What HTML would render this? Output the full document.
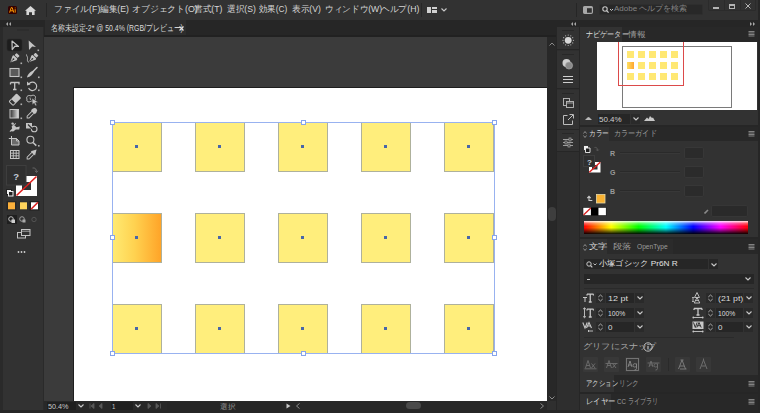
<!DOCTYPE html>
<html><head><meta charset="utf-8"><style>*{margin:0;padding:0;box-sizing:border-box}
html,body{width:760px;height:413px;overflow:hidden;background:#323232;font-family:"Liberation Sans",sans-serif;color:#d2d2d2}
.a{position:absolute}
.t{position:absolute;white-space:nowrap;line-height:1;transform-origin:0 0}
.sq{width:50px;height:50px;background:#ffee7c;border:1px solid #aeb19c}
.grad{background:linear-gradient(90deg,#ffea72,#ffd250 45%,#ffa428)}
.dot{width:3px;height:3px;background:#4866a8}
.hd{width:5px;height:5px;background:#fff;border:1px solid #86a4ec}
.trk{width:60px;height:2px;background:#2a2a2a;border-bottom:1px solid #383838}
.vbox{width:20px;height:12px;background:#2b2b2b;border:1px solid #373737;border-radius:2px}
</style></head><body>
<div class="a" style="left:0px;top:0px;width:760px;height:20px;background:#323232;"></div>
<div class="a" style="left:8px;top:6px;width:9px;height:8px;background:#330000;border-radius:1.5px"></div>
<svg class="a" style="left:9px;top:7px" width="7" height="6" viewBox="0 0 7 6"><path d="M0.6 5.6 L2.2 0.6 L3.2 0.6 L4.8 5.6 M1.3 3.8 L4.1 3.8 M6.2 2.2 L6.2 5.6 M6.2 0.6 L6.2 1.3" stroke="#ff9a00" stroke-width="1" fill="none"/></svg>
<svg class="a" style="left:25px;top:6px" width="11" height="9" viewBox="0 0 11 9"><path d="M5.5 0 L11 4.8 L9.6 4.8 L9.6 9 L7 9 L7 6.3 L4 6.3 L4 9 L1.4 9 L1.4 4.8 L0 4.8 Z" fill="#d8d8d8"/></svg>
<div class="a" style="left:46px;top:3px;width:1px;height:14px;background:#262626;"></div>
<div class="t" style="left:54px;top:5px;font-size:9px;color:#d6d6d6;font-weight:normal;transform:scaleX(0.975)">ファイル(F)</div>
<div class="t" style="left:100px;top:5px;font-size:9px;color:#d6d6d6;font-weight:normal;transform:scaleX(0.962)">編集(E)</div>
<div class="t" style="left:132px;top:5px;font-size:9px;color:#d6d6d6;font-weight:normal;transform:scaleX(0.982)">オブジェクト(O)</div>
<div class="t" style="left:194px;top:5px;font-size:9px;color:#d6d6d6;font-weight:normal;transform:scaleX(0.962)">書式(T)</div>
<div class="t" style="left:227px;top:5px;font-size:9px;color:#d6d6d6;font-weight:normal;transform:scaleX(0.962)">選択(S)</div>
<div class="t" style="left:259px;top:5px;font-size:9px;color:#d6d6d6;font-weight:normal;transform:scaleX(0.926)">効果(C)</div>
<div class="t" style="left:292px;top:5px;font-size:9px;color:#d6d6d6;font-weight:normal;transform:scaleX(0.962)">表示(V)</div>
<div class="t" style="left:325px;top:5px;font-size:9px;color:#d6d6d6;font-weight:normal;transform:scaleX(0.960)">ウィンドウ(W)</div>
<div class="t" style="left:381px;top:5px;font-size:9px;color:#d6d6d6;font-weight:normal;transform:scaleX(0.971)">ヘルプ(H)</div>
<div class="a" style="left:421px;top:3px;width:1px;height:14px;background:#262626;"></div>
<div class="a" style="left:427px;top:7px;width:4px;height:6px;background:#d0d0d0;"></div>
<div class="a" style="left:432px;top:7px;width:5px;height:2px;background:#d0d0d0;"></div>
<div class="a" style="left:432px;top:10px;width:5px;height:3px;background:#d0d0d0;"></div>
<svg class="a" style="left:441px;top:8px" width="6" height="4" viewBox="0 0 6 4"><path d="M0.5 0.5 L3 3 L5.5 0.5" stroke="#c8c8c8" fill="none" stroke-width="1.1"/></svg>
<div class="a" style="left:576px;top:3px;width:1px;height:14px;background:#262626;"></div>
<svg class="a" style="left:583px;top:6px" width="10" height="8" viewBox="0 0 10 8"><rect x="0.6" y="0.6" width="8.8" height="6.8" rx="1.2" fill="none" stroke="#a8a8a8" stroke-width="1.2"/><rect x="0.6" y="0.6" width="3.4" height="6.8" fill="#a8a8a8"/><path d="M0.6 1.5 H9.4" stroke="#a8a8a8" stroke-width="1.4"/></svg>
<div class="a" style="left:599px;top:4px;width:104px;height:11px;background:#282828;border-radius:2px;border:1px solid #2e2e2e"></div>
<svg class="a" style="left:602px;top:6px" width="12" height="8" viewBox="0 0 12 8"><circle cx="3" cy="3" r="2.2" stroke="#c8c8c8" fill="none" stroke-width="1.1"/><path d="M4.6 4.6 L6.6 6.6" stroke="#c8c8c8" stroke-width="1.3"/><path d="M8 3 L9.5 4.5 L11 3" stroke="#c8c8c8" fill="none"/></svg>
<div class="t" style="left:614px;top:5px;font-size:8px;color:#858585;font-weight:normal;transform:scaleX(1.000)">Adobe ヘルプを検索</div>
<div class="a" style="left:708px;top:0px;width:48px;height:11px;background:transparent;border:1px solid #2b2b2b;border-top:none;border-radius:0 0 2px 2px"></div>
<div class="a" style="left:724px;top:0px;width:1px;height:11px;background:#2b2b2b;"></div>
<div class="a" style="left:740px;top:0px;width:1px;height:11px;background:#2b2b2b;"></div>
<div class="a" style="left:713px;top:7px;width:6px;height:2px;background:#b4b4b4;"></div>
<div class="a" style="left:729px;top:4px;width:6px;height:5px;background:transparent;border:1px solid #b4b4b4;border-top-width:2px"></div>
<svg class="a" style="left:745px;top:3px" width="6" height="6" viewBox="0 0 6 6"><path d="M0.5 0.5 L5.5 5.5 M5.5 0.5 L0.5 5.5" stroke="#b4b4b4" stroke-width="1"/></svg>
<div class="a" style="left:0px;top:20px;width:44px;height:7px;background:#262626;"></div>
<svg class="a" style="left:6px;top:22px" width="5" height="4" viewBox="0 0 5 4"><path d="M2 0 L0 2 L2 4 Z M5 0 L3 2 L5 4 Z" fill="#a8a8a8"/></svg>
<div class="a" style="left:44px;top:20px;width:513px;height:17px;background:#262626;"></div>
<div class="a" style="left:45px;top:20px;width:141px;height:15px;background:#2d2d2d;"></div>
<div class="a" style="left:44px;top:35px;width:513px;height:2px;background:#212121;"></div>
<div class="t" style="left:51px;top:24px;font-size:9px;color:#dadada;font-weight:normal;transform:scaleX(0.768)">名称未設定-2* @ 50.4% (RGB/プレビュー)</div>
<svg class="a" style="left:179px;top:26px" width="5" height="5" viewBox="0 0 5 5"><path d="M0.5 0.5 L4.5 4.5 M4.5 0.5 L0.5 4.5" stroke="#e0e0e0" stroke-width="1.2"/></svg>
<div class="a" style="left:0px;top:27px;width:44px;height:386px;background:#2a2a2a;"></div>
<div class="a" style="left:3px;top:27px;width:40px;height:383px;background:#323232;"></div>
<svg class="a" style="left:0;top:0" width="44" height="260" viewBox="0 0 44 260">
<rect x="17" y="29.5" width="12" height="1" fill="#282828"/>
<rect x="7" y="39" width="15" height="12" rx="2" fill="#1d1d1d" stroke="#2a2a2a" stroke-width="0.6"/>
<path d="M12 41 L18.5 46.5 L15 46.2 L12.2 49.5 Z" fill="none" stroke="#c4c4c4" stroke-width="1.2" stroke-linejoin="round"/>
<path d="M28.7 40.5 L36 47 L32.2 46.6 L29 50 Z" fill="#c4c4c4"/>
<rect x="37.5" y="49.5" width="1.6" height="1.6" fill="#b0b0b0"/>
<!-- pen -->
<g transform="translate(14.3,58.3) rotate(45)">
<path d="M0 5.8 L-3 -0.4 Q-3.1 -1.6 -2.2 -1.8 H2.2 Q3.1 -1.6 3 -0.4 Z" fill="#c4c4c4"/>
<rect x="-2.1" y="-5.4" width="4.2" height="2.9" rx="0.6" fill="#c4c4c4"/>
<path d="M0 5.8 V1.3" stroke="#323232" stroke-width="0.8"/><circle cx="0" cy="1.1" r="0.8" fill="#323232"/>
</g>
<rect x="20.5" y="62.5" width="1.6" height="1.6" fill="#b0b0b0"/>
<g transform="translate(33.2,58) rotate(45)">
<path d="M0 5.8 L-3 -0.4 Q-3.1 -1.6 -2.2 -1.8 H2.2 Q3.1 -1.6 3 -0.4 Z" fill="#c4c4c4"/>
<rect x="-2.1" y="-5.4" width="4.2" height="2.9" rx="0.6" fill="#c4c4c4"/>
<path d="M0 5.8 V1.3" stroke="#323232" stroke-width="0.8"/><circle cx="0" cy="1.1" r="0.8" fill="#323232"/>
</g>
<path d="M29 62.3 C26.5 61.5 27.8 59 27.5 57.5 C27.3 56.3 26.3 55.5 26.5 54.5" fill="none" stroke="#c4c4c4" stroke-width="0.9"/>
<!-- rectangle -->
<rect x="10" y="68.5" width="9" height="8" fill="#5a5a5a" stroke="#c4c4c4" stroke-width="1.1"/>
<rect x="20.5" y="76.5" width="1.6" height="1.6" fill="#b0b0b0"/>
<!-- brush -->
<path d="M37 67.5 L32.8 71.7" stroke="#c4c4c4" stroke-width="1.5" stroke-linecap="round"/>
<path d="M33.6 70.6 L34.2 71.2 C33 74 30.5 77 27 77.6 C27.4 74.5 30.5 71.6 33.6 70.6 Z" fill="#c4c4c4"/>
<rect x="38" y="76.5" width="1.6" height="1.6" fill="#b0b0b0"/>
<!-- type -->
<path d="M10.5 82.5 L19 82.5 L19 84.5 M10.5 82.5 L10.5 84.5 M14.7 82.5 L14.7 89.5 M13 89.5 L16.5 89.5" fill="none" stroke="#c4c4c4" stroke-width="1.3"/>
<rect x="20.5" y="89.5" width="1.6" height="1.6" fill="#b0b0b0"/>
<!-- rotate -->
<path d="M29 84 A4.2 4.2 0 1 1 28.6 88" fill="none" stroke="#c4c4c4" stroke-width="1.2"/>
<path d="M27 81.5 L30.5 84.5 L27 85.5 Z" fill="#c4c4c4"/>
<rect x="38" y="89.5" width="1.6" height="1.6" fill="#b0b0b0"/>
<!-- eraser -->
<g transform="translate(15,99.6) rotate(-45)">
<rect x="-2.3" y="-3.3" width="7.8" height="6.6" rx="1" fill="#c4c4c4"/>
<path d="M-2 -2.8 H-4.7 Q-5.5 -2.8 -5.5 -2 V2 Q-5.5 2.8 -4.7 2.8 H-2" fill="none" stroke="#c4c4c4" stroke-width="1"/>
</g>
<rect x="20.5" y="103.5" width="1.6" height="1.6" fill="#b0b0b0"/>
<!-- shaper -->
<path d="M27 99.2 C25.6 96.4 28.8 94.6 31 96 C33.2 94.2 36.6 95.8 35.2 98.6 C36 100.8 33.4 102.4 31.2 101 C29.2 102.8 26 101.6 27 99.2 Z" fill="none" stroke="#c4c4c4" stroke-width="1"/>
<path d="M30 97.5 L30.5 100" stroke="#c4c4c4" stroke-width="0.8"/>
<path d="M32 98.3 L38.3 102.2 L35.5 102.6 L36.8 105.2 L35.4 105.8 L34.2 103.2 L32.3 104.8 Z" fill="#c4c4c4" stroke="#323232" stroke-width="0.5"/>
<!-- gradient -->
<defs><linearGradient id="g1" x1="0" y1="0" x2="1" y2="0"><stop offset="0" stop-color="#303030"/><stop offset="1" stop-color="#e0e0e0"/></linearGradient></defs>
<rect x="10" y="109.5" width="8.5" height="8.5" fill="url(#g1)" stroke="#c4c4c4" stroke-width="1"/>
<rect x="20.5" y="117.5" width="1.6" height="1.6" fill="#b0b0b0"/>
<!-- eyedropper -->
<g transform="translate(31.8,113.4) rotate(-45)">
<path d="M-6.6 0 L-5.2 -1.4 H1.8 V1.4 H-5.2 Z" fill="none" stroke="#c4c4c4" stroke-width="0.95"/>
<path d="M1.6 -2.7 H3.8 Q6.6 -2.2 6.6 0 Q6.6 2.2 3.8 2.7 H1.6 Z" fill="#c4c4c4"/>
</g>
<!-- puppet warp -->
<path d="M9.6 131.2 L12.2 128.6 L11.6 126.4 L13.8 124.8 L16.4 127.2 L19.8 126.4 L19.2 129.6 L15.8 129.4 L13.2 131.6 L11 131.2 L10.2 132 Z" fill="#c4c4c4"/>
<circle cx="12.6" cy="123.6" r="1.2" fill="#c4c4c4"/>
<path d="M12.6 125.5 L16 123.5" stroke="#c4c4c4" stroke-width="0.9"/>
<!-- shape builder -->
<rect x="26" y="123" width="6" height="5.5" fill="#c4c4c4"/>
<circle cx="34.2" cy="129" r="2.8" fill="#323232" stroke="#c4c4c4" stroke-width="1.1"/>
<path d="M28 124.5 L33 129.5" stroke="#323232" stroke-width="1.2"/>
<!-- artboard -->
<path d="M11.5 138.5 H16.5 L19 141 V145 H11.5 Z" fill="#6a6a6a" stroke="#c4c4c4" stroke-width="1"/>
<path d="M16.5 138.5 V141 H19" fill="none" stroke="#c4c4c4" stroke-width="0.9"/>
<path d="M8.8 138.5 H13.5 M11.5 136 V140.5" stroke="#c4c4c4" stroke-width="1"/>
<!-- zoom -->
<circle cx="30.4" cy="139.8" r="3.5" fill="none" stroke="#c4c4c4" stroke-width="1.1"/>
<path d="M33 142.5 L36.3 145.6" stroke="#c4c4c4" stroke-width="1.5"/>
<rect x="38" y="145" width="1.6" height="1.6" fill="#b0b0b0"/>
<!-- mesh -->
<rect x="10.5" y="150.5" width="8.5" height="8" fill="none" stroke="#c4c4c4" stroke-width="1"/>
<path d="M13.3 150.5 V158.5 M16.2 150.5 V158.5 M10.5 153.2 H19 M10.5 155.8 H19" stroke="#c4c4c4" stroke-width="0.9"/>
<!-- eyedropper2 -->
<g transform="translate(31.8,154.4) rotate(-45)">
<path d="M-6.6 0 L-5.2 -1.4 H1.8 V1.4 H-5.2 Z" fill="none" stroke="#c4c4c4" stroke-width="0.95"/>
<path d="M1.6 -3 L6.8 0 L1.6 3 Z" fill="#c4c4c4"/>
</g>
<!-- fill/stroke -->
<path d="M16 176 H37 V196 H16 Z M22 182 V190 H31 V182 Z" fill="#ffffff" fill-rule="evenodd"/>
<path d="M16.5 195.5 L36.5 176.5" stroke="#e0201e" stroke-width="1.6"/>
<rect x="6.5" y="165.5" width="19.5" height="19.5" fill="#2f2f2f" stroke="#3e3e3e" stroke-width="1"/>
<text x="13.3" y="179.5" font-family="Liberation Sans" font-size="9.5" font-weight="bold" fill="#c4ccd8">?</text>
<path d="M32.5 168 C35 167.5 36.5 169 36.5 171.8 M35 170.8 L36.5 172.5 L38 170.8" stroke="#6a6a6a" fill="none" stroke-width="0.9"/>
<rect x="6.5" y="189.5" width="5" height="5" fill="#f0f0f0" stroke="#202020" stroke-width="1"/>
<rect x="8.5" y="191.5" width="4.5" height="4.5" fill="#202020" stroke="#f0f0f0" stroke-width="1"/>
<!-- swatches -->
<rect x="6.5" y="201" width="10" height="9.5" fill="#262626"/>
<rect x="8" y="202.3" width="7" height="7" fill="#fbb03b"/>
<rect x="18.5" y="201" width="10" height="9.5" fill="#2e2e2e"/>
<rect x="20" y="202.3" width="7" height="7" fill="#ffd45c"/>
<rect x="29.5" y="201" width="10" height="9.5" fill="#1e1e1e"/>
<rect x="31" y="202.3" width="7" height="7" fill="#ffffff"/>
<path d="M31 209.3 L38 202.3" stroke="#d81e1e" stroke-width="1.6"/>
<!-- draw modes -->
<rect x="7" y="215" width="10" height="9" fill="#1f1f1f"/>
<circle cx="11" cy="219" r="2.3" fill="none" stroke="#d0d0d0" stroke-width="0.9"/>
<rect x="11.5" y="219.5" width="3.5" height="3.5" fill="#d0d0d0"/>
<circle cx="22" cy="219" r="2.3" fill="none" stroke="#a8a8a8" stroke-width="0.9"/>
<rect x="22.5" y="219.5" width="3" height="3" fill="#a8a8a8"/>
<circle cx="34" cy="219.5" r="2.2" fill="none" stroke="#555" stroke-width="0.9"/>
<!-- screen mode -->
<rect x="17.5" y="232.5" width="8" height="5.5" fill="#323232" stroke="#c4c4c4" stroke-width="1"/>
<rect x="21.5" y="229.5" width="8.5" height="6" fill="#323232" stroke="#c4c4c4" stroke-width="1"/>
<path d="M21.5 231.2 H30" stroke="#c4c4c4" stroke-width="0.8"/>
<!-- more -->
<circle cx="18.5" cy="252" r="0.9" fill="#d0d0d0"/><circle cx="21.5" cy="252" r="0.9" fill="#d0d0d0"/><circle cx="24.5" cy="252" r="0.9" fill="#d0d0d0"/>
</svg>
<div class="a" style="left:44px;top:37px;width:503px;height:364px;background:#3b3b3b;"></div>
<div class="a" style="left:73px;top:87px;width:474px;height:314px;background:#1e1e1e;"></div>
<div class="a" style="left:74px;top:88px;width:473px;height:313px;background:#ffffff;"></div>
<div class="a sq" style="left:112px;top:122px"></div><div class="a dot" style="left:135px;top:145px"></div>
<div class="a sq" style="left:195px;top:122px"></div><div class="a dot" style="left:218px;top:145px"></div>
<div class="a sq" style="left:278px;top:122px"></div><div class="a dot" style="left:301px;top:145px"></div>
<div class="a sq" style="left:361px;top:122px"></div><div class="a dot" style="left:384px;top:145px"></div>
<div class="a sq" style="left:444px;top:122px"></div><div class="a dot" style="left:467px;top:145px"></div>
<div class="a sq grad" style="left:112px;top:213px"></div><div class="a dot" style="left:135px;top:236px"></div>
<div class="a sq" style="left:195px;top:213px"></div><div class="a dot" style="left:218px;top:236px"></div>
<div class="a sq" style="left:278px;top:213px"></div><div class="a dot" style="left:301px;top:236px"></div>
<div class="a sq" style="left:361px;top:213px"></div><div class="a dot" style="left:384px;top:236px"></div>
<div class="a sq" style="left:444px;top:213px"></div><div class="a dot" style="left:467px;top:236px"></div>
<div class="a sq" style="left:112px;top:304px"></div><div class="a dot" style="left:135px;top:327px"></div>
<div class="a sq" style="left:195px;top:304px"></div><div class="a dot" style="left:218px;top:327px"></div>
<div class="a sq" style="left:278px;top:304px"></div><div class="a dot" style="left:301px;top:327px"></div>
<div class="a sq" style="left:361px;top:304px"></div><div class="a dot" style="left:384px;top:327px"></div>
<div class="a sq" style="left:444px;top:304px"></div><div class="a dot" style="left:467px;top:327px"></div>
<div class="a" style="left:112px;top:122px;width:383px;height:232px;border:1px solid #98b2f0"></div>
<div class="a hd" style="left:110px;top:120px"></div>
<div class="a hd" style="left:301px;top:120px"></div>
<div class="a hd" style="left:492px;top:120px"></div>
<div class="a hd" style="left:110px;top:235px"></div>
<div class="a hd" style="left:492px;top:235px"></div>
<div class="a hd" style="left:110px;top:351px"></div>
<div class="a hd" style="left:301px;top:351px"></div>
<div class="a hd" style="left:492px;top:351px"></div>
<div class="a" style="left:547px;top:37px;width:9px;height:373px;background:#282828;"></div>
<div class="a" style="left:548px;top:207px;width:8px;height:14px;background:#3e3e3e;border-radius:4px"></div>
<svg class="a" style="left:549px;top:42px" width="6" height="4" viewBox="0 0 6 4"><path d="M0.5 3.5 L3 1 L5.5 3.5" stroke="#8a8a8a" fill="none" stroke-width="1"/></svg>
<svg class="a" style="left:549px;top:396px" width="6" height="4" viewBox="0 0 6 4"><path d="M0.5 0.5 L3 3 L5.5 0.5" stroke="#8a8a8a" fill="none" stroke-width="1"/></svg>
<div class="a" style="left:44px;top:401px;width:503px;height:9px;background:#282828;"></div>
<div class="a" style="left:47px;top:402px;width:29px;height:8px;background:#1f1f1f;"></div>
<div class="t" style="left:48px;top:403px;font-size:8px;color:#c8c8c8;font-weight:normal;transform:scaleX(0.905)">50.4%</div>
<svg class="a" style="left:78px;top:404px" width="6" height="4" viewBox="0 0 6 4"><path d="M0.5 0.5 L3 3 L5.5 0.5" stroke="#c8c8c8" fill="none" stroke-width="1.1"/></svg>
<svg class="a" style="left:89px;top:403px" width="22" height="6" viewBox="0 0 22 6"><path d="M1 0.5 V5.5 M5 0.5 L2 3 L5 5.5 Z M13 0.5 L10 3 L13 5.5 Z" stroke="#5a5a5a" fill="#5a5a5a" stroke-width="0.8"/></svg>
<div class="a" style="left:111px;top:402px;width:22px;height:8px;background:#1f1f1f;"></div>
<div class="t" style="left:112px;top:403px;font-size:8px;color:#c8c8c8;font-weight:normal;transform:scaleX(0.750)">1</div>
<svg class="a" style="left:135px;top:404px" width="6" height="4" viewBox="0 0 6 4"><path d="M0.5 0.5 L3 3 L5.5 0.5" stroke="#c8c8c8" fill="none" stroke-width="1.1"/></svg>
<svg class="a" style="left:146px;top:403px" width="22" height="6" viewBox="0 0 22 6"><path d="M2 0.5 L5 3 L2 5.5 Z M10 0.5 L13 3 L10 5.5 Z M14.5 0.5 V5.5" stroke="#5a5a5a" fill="#5a5a5a" stroke-width="0.8"/></svg>
<div class="a" style="left:167px;top:402px;width:115px;height:8px;background:#262626;"></div>
<div class="t" style="left:220px;top:403px;font-size:7px;color:#9a9a9a;font-weight:normal;transform:scaleX(1.100)">選択</div>
<svg class="a" style="left:286px;top:403px" width="5" height="6" viewBox="0 0 5 6"><path d="M0.5 0.5 L4.5 3 L0.5 5.5 Z" fill="#c8c8c8"/></svg>
<svg class="a" style="left:296px;top:403px" width="4" height="6" viewBox="0 0 4 6"><path d="M3.5 0.5 L0.5 3 L3.5 5.5" stroke="#8a8a8a" fill="none"/></svg>
<div class="a" style="left:406px;top:402px;width:15px;height:7px;background:#4a4a4a;border-radius:3.5px"></div>
<div class="a" style="left:547px;top:401px;width:9px;height:9px;background:#2f2f2f;"></div>
<svg class="a" style="left:540px;top:403px" width="4" height="6" viewBox="0 0 4 6"><path d="M0.5 0.5 L3.5 3 L0.5 5.5" stroke="#8a8a8a" fill="none"/></svg>
<div class="a" style="left:0px;top:410px;width:760px;height:3px;background:#262626;"></div>
<div class="a" style="left:556px;top:20px;width:24px;height:7px;background:#262626;"></div>
<div class="a" style="left:556px;top:27px;width:24px;height:383px;background:#2e2e2e;border-left:1px solid #262626;border-right:1px solid #262626"></div>
<div class="a" style="left:557px;top:27px;width:22px;height:23px;background:#323232;border-bottom:1px solid #262626"></div>
<div class="a" style="left:562px;top:30px;width:12px;height:1px;background:#282828;"></div>
<div class="a" style="left:557px;top:51px;width:22px;height:38px;background:#323232;border-bottom:1px solid #262626"></div>
<div class="a" style="left:562px;top:54px;width:12px;height:1px;background:#282828;"></div>
<div class="a" style="left:557px;top:90px;width:22px;height:40px;background:#323232;border-bottom:1px solid #262626"></div>
<div class="a" style="left:562px;top:93px;width:12px;height:1px;background:#282828;"></div>
<div class="a" style="left:557px;top:130px;width:22px;height:22px;background:#323232;border-bottom:1px solid #262626"></div>
<div class="a" style="left:562px;top:133px;width:12px;height:1px;background:#282828;"></div>
<svg class="a" style="left:557px;top:27px" width="22" height="130" viewBox="557 27 22 130">
<!-- sun -->
<circle cx="568.2" cy="40.3" r="3.4" fill="#d8d8d8"/><circle cx="573.40" cy="40.30" r="0.6" fill="#b8b8b8"/><circle cx="572.70" cy="42.90" r="0.6" fill="#b8b8b8"/><circle cx="570.80" cy="44.80" r="0.6" fill="#b8b8b8"/><circle cx="568.20" cy="45.50" r="0.6" fill="#b8b8b8"/><circle cx="565.60" cy="44.80" r="0.6" fill="#b8b8b8"/><circle cx="563.70" cy="42.90" r="0.6" fill="#b8b8b8"/><circle cx="563.00" cy="40.30" r="0.6" fill="#b8b8b8"/><circle cx="563.70" cy="37.70" r="0.6" fill="#b8b8b8"/><circle cx="565.60" cy="35.80" r="0.6" fill="#b8b8b8"/><circle cx="568.20" cy="35.10" r="0.6" fill="#b8b8b8"/><circle cx="570.80" cy="35.80" r="0.6" fill="#b8b8b8"/><circle cx="572.70" cy="37.70" r="0.6" fill="#b8b8b8"/>
<!-- circles -->
<circle cx="566.5" cy="63" r="4" fill="#cfcfcf"/>
<circle cx="569" cy="65.5" r="3.6" fill="#8a8a8a" stroke="#b0b0b0" stroke-width="0.6"/>
<!-- lines -->
<path d="M563 76.5 H573 M563 79.5 H573 M563 82.5 H573" stroke="#cfcfcf" stroke-width="1.1"/>
<!-- copy -->
<rect x="563.5" y="98.5" width="6" height="7" fill="none" stroke="#bdbdbd" stroke-width="0.9"/>
<rect x="566.5" y="101.5" width="7" height="6" fill="#323232" stroke="#bdbdbd" stroke-width="0.9"/>
<path d="M566.5 103 H573.5" stroke="#bdbdbd" stroke-width="0.8"/>
<!-- export -->
<path d="M567.5 115.5 H563.5 V124.5 H572.5 V120.5" fill="none" stroke="#bdbdbd" stroke-width="1"/>
<path d="M568 120 L573 115 M569.5 114.5 H573.5 V118.5" fill="none" stroke="#bdbdbd" stroke-width="1"/>
<!-- sliders -->
<path d="M563 139.5 H573 M563 142.5 H573 M563 145.5 H573" stroke="#a8a8a8" stroke-width="0.9"/>
<rect x="569" y="138" width="2" height="3" fill="#323232" stroke="#a8a8a8" stroke-width="0.7"/>
<rect x="565" y="141" width="2" height="3" fill="#323232" stroke="#a8a8a8" stroke-width="0.7"/>
<rect x="568" y="144" width="2" height="3" fill="#323232" stroke="#a8a8a8" stroke-width="0.7"/>
</svg>
<div class="a" style="left:580px;top:20px;width:180px;height:393px;background:#262626;"></div>
<div class="a" style="left:758px;top:0px;width:2px;height:413px;background:#262626;"></div>
<svg class="a" style="left:750px;top:22px" width="5" height="4" viewBox="0 0 5 4"><path d="M0 0 L2 2 L0 4 Z M3 0 L5 2 L3 4 Z" fill="#a8a8a8"/></svg>
<svg class="a" style="left:571px;top:22px" width="5" height="4" viewBox="0 0 5 4"><path d="M2 0 L0 2 L2 4 Z M5 0 L3 2 L5 4 Z" fill="#a8a8a8"/></svg>
<div class="a" style="left:580px;top:27px;width:178px;height:15px;background:#282828;"></div>
<div class="a" style="left:580px;top:27px;width:42px;height:15px;background:#323232;"></div>
<div class="t" style="left:586px;top:31px;font-size:8px;color:#dcdcdc;font-weight:normal;transform:scaleX(0.889)">ナビゲーター</div>
<div class="t" style="left:628px;top:31px;font-size:8px;color:#9c9c9c;font-weight:normal;transform:scaleX(1.083)">情報</div>
<svg class="a" style="left:748px;top:31px" width="7" height="6" viewBox="0 0 7 6"><path d="M0.5 0.5 H6.5 M0.5 2 H6.5 M0.5 3.5 H6.5 M0.5 5 H6.5" stroke="#8c8c8c" stroke-width="0.9"/></svg>
<div class="a" style="left:580px;top:42px;width:178px;height:83px;background:#323232;"></div>
<div class="a" style="left:597px;top:42px;width:160px;height:68px;background:#ffffff;"></div>
<div class="a" style="left:622px;top:46px;width:110px;height:62px;background:transparent;border:1px solid #7a7a7a"></div>
<div class="a" style="left:627px;top:51px;width:7px;height:7px;background:#ffe873;"></div>
<div class="a" style="left:638px;top:51px;width:7px;height:7px;background:#ffe873;"></div>
<div class="a" style="left:649px;top:51px;width:7px;height:7px;background:#ffe873;"></div>
<div class="a" style="left:660px;top:51px;width:7px;height:7px;background:#ffe873;"></div>
<div class="a" style="left:671px;top:51px;width:7px;height:7px;background:#ffe873;"></div>
<div class="a" style="left:627px;top:62px;width:7px;height:7px;background:linear-gradient(90deg,#ffe060,#ffa630);"></div>
<div class="a" style="left:638px;top:62px;width:7px;height:7px;background:#ffe873;"></div>
<div class="a" style="left:649px;top:62px;width:7px;height:7px;background:#ffe873;"></div>
<div class="a" style="left:660px;top:62px;width:7px;height:7px;background:#ffe873;"></div>
<div class="a" style="left:671px;top:62px;width:7px;height:7px;background:#ffe873;"></div>
<div class="a" style="left:627px;top:73px;width:7px;height:7px;background:#ffe873;"></div>
<div class="a" style="left:638px;top:73px;width:7px;height:7px;background:#ffe873;"></div>
<div class="a" style="left:649px;top:73px;width:7px;height:7px;background:#ffe873;"></div>
<div class="a" style="left:660px;top:73px;width:7px;height:7px;background:#ffe873;"></div>
<div class="a" style="left:671px;top:73px;width:7px;height:7px;background:#ffe873;"></div>
<div class="a" style="left:618px;top:42px;width:66px;height:44px;background:transparent;border:1px solid #dc4a4a;border-top:none"></div>
<svg class="a" style="left:585px;top:117px" width="7" height="3" viewBox="0 0 7 3"><path d="M0 3 L2.5 0.5 L3.5 0 L4.5 0.5 L7 3 Z" fill="#b8b8b8"/></svg>
<div class="a" style="left:598px;top:114px;width:32px;height:10px;background:#262626;"></div>
<div class="t" style="left:599px;top:116px;font-size:8px;color:#cfcfcf;font-weight:normal;transform:scaleX(1.000)">50.4%</div>
<div class="a" style="left:631px;top:114px;width:9px;height:10px;background:#2a2a2a;"></div>
<svg class="a" style="left:633px;top:117px" width="6" height="4" viewBox="0 0 6 4"><path d="M0.5 0.5 L3 3 L5.5 0.5" stroke="#c8c8c8" fill="none" stroke-width="1.1"/></svg>
<svg class="a" style="left:644px;top:116px" width="11" height="5" viewBox="0 0 11 5"><path d="M0 5 L3 1.5 L4.5 3 L6 0 L8 2 L9 1.5 L11 5 Z" fill="#c8c8c8"/></svg>
<div class="a" style="left:580px;top:127px;width:178px;height:14px;background:#282828;"></div>
<div class="a" style="left:580px;top:127px;width:29px;height:14px;background:#323232;"></div>
<div class="a" style="left:609px;top:127px;width:41px;height:14px;background:#2b2b2b;"></div>
<svg class="a" style="left:583px;top:131px" width="4" height="7" viewBox="0 0 4 7"><path d="M0.5 2.5 L2 0.5 L3.5 2.5 M0.5 4.5 L2 6.5 L3.5 4.5" stroke="#a0a0a0" fill="none" stroke-width="0.8"/></svg>
<div class="t" style="left:589px;top:130px;font-size:8px;color:#dcdcdc;font-weight:normal;transform:scaleX(0.833)">カラー</div>
<div class="t" style="left:614px;top:130px;font-size:8px;color:#9c9c9c;font-weight:normal;transform:scaleX(0.889)">カラーガイド</div>
<svg class="a" style="left:748px;top:131px" width="7" height="6" viewBox="0 0 7 6"><path d="M0.5 0.5 H6.5 M0.5 2 H6.5 M0.5 3.5 H6.5 M0.5 5 H6.5" stroke="#8c8c8c" stroke-width="0.9"/></svg>
<div class="a" style="left:580px;top:141px;width:178px;height:96px;background:#323232;"></div>
<div class="t" style="left:610px;top:150px;font-size:7px;color:#9a9a9a;font-weight:bold;transform:scaleX(1.000)">R</div>
<div class="a trk" style="left:620px;top:152px"></div>
<div class="a vbox" style="left:684px;top:147px"></div>
<div class="t" style="left:610px;top:169px;font-size:7px;color:#9a9a9a;font-weight:bold;transform:scaleX(1.000)">G</div>
<div class="a trk" style="left:620px;top:171px"></div>
<div class="a vbox" style="left:684px;top:166px"></div>
<div class="t" style="left:610px;top:188px;font-size:7px;color:#9a9a9a;font-weight:bold;transform:scaleX(1.000)">B</div>
<div class="a trk" style="left:620px;top:190px"></div>
<div class="a vbox" style="left:684px;top:185px"></div>
<svg class="a" style="left:580px;top:141px" width="30" height="80" viewBox="0 0 30 80">
<path d="M3.5 4.5 H8.5 V9.5 H3.5 Z" fill="#f0f0f0" stroke="#1e1e1e" stroke-width="0.8"/>
<path d="M5.5 7 H10 V11.5 H5.5 Z" fill="#1e1e1e" stroke="#f0f0f0" stroke-width="0.9"/>
<path d="M14.5 6.5 C16.5 6 17.5 7 17.5 9.3 M16.3 8.5 L17.5 10 L18.8 8.5" stroke="#5a5a5a" fill="none" stroke-width="0.9"/>
<path d="M9 21 H20.5 V31.5 H9 Z M12 24 V28.5 H17.5 V24 Z" fill="#ffffff" fill-rule="evenodd"/>
<path d="M9.3 31.2 L20.2 21.2" stroke="#e0201e" stroke-width="1.4"/>
<rect x="3.5" y="14.5" width="11" height="11" fill="#2f2f2f" stroke="#3e3e3e" stroke-width="1"/>
<text x="7" y="23.5" font-family="Liberation Sans" font-size="8" font-weight="bold" fill="#c4ccd8">?</text>
<path d="M9 60 V55.5 M7.3 57.2 L9 55.3 L10.7 57.2 M9 59.5 H12.3" stroke="#cfcfcf" fill="none" stroke-width="1.1"/>
<rect x="16.5" y="53.5" width="8.5" height="8.5" fill="#f9b233" stroke="#e8d9a8" stroke-width="0.8"/>
<rect x="2.5" y="66" width="24" height="9" fill="#202020"/>
<rect x="3.3" y="66.8" width="7.6" height="7.4" fill="#ffffff"/>
<path d="M3.5 74 L10.8 67" stroke="#d81e1e" stroke-width="1.3"/>
<rect x="11" y="66.8" width="7" height="7.4" fill="#000000"/>
<rect x="18.5" y="66.8" width="7.4" height="7.4" fill="#ffffff"/>
</svg>
<div class="a" style="left:711px;top:205px;width:37px;height:12px;background:#2a2a2a;border:1px solid #363636;border-radius:2px"></div>
<svg class="a" style="left:704px;top:209px" width="5" height="5" viewBox="0 0 5 5"><path d="M0.5 4.5 L4 1" stroke="#8a8a8a" stroke-width="1.6"/></svg>
<div class="a" style="left:584px;top:221px;width:164px;height:13px;background:linear-gradient(90deg,#f00 0%,#ff0 16.6%,#0f0 33.3%,#0ff 50%,#00f 66.6%,#f0f 83.3%,#f00 100%);"></div>
<div class="a" style="left:584px;top:221px;width:164px;height:13px;background:linear-gradient(180deg,rgba(255,255,255,.92) 0%,rgba(255,255,255,.35) 18%,rgba(255,255,255,0) 40%,rgba(0,0,0,0) 52%,rgba(0,0,0,.95) 100%);"></div>
<div class="a" style="left:580px;top:239px;width:178px;height:15px;background:#282828;"></div>
<div class="a" style="left:580px;top:239px;width:27px;height:15px;background:#323232;"></div>
<div class="a" style="left:607px;top:239px;width:26px;height:15px;background:#2b2b2b;"></div>
<div class="a" style="left:633px;top:239px;width:40px;height:15px;background:#2b2b2b;"></div>
<svg class="a" style="left:583px;top:244px" width="4" height="7" viewBox="0 0 4 7"><path d="M0.5 2.5 L2 0.5 L3.5 2.5 M0.5 4.5 L2 6.5 L3.5 4.5" stroke="#a0a0a0" fill="none" stroke-width="0.8"/></svg>
<div class="t" style="left:589px;top:243px;font-size:8px;color:#dcdcdc;font-weight:normal;transform:scaleX(1.167)">文字</div>
<div class="t" style="left:613px;top:243px;font-size:8px;color:#9c9c9c;font-weight:normal;transform:scaleX(1.167)">段落</div>
<div class="t" style="left:637px;top:243px;font-size:8px;color:#9c9c9c;font-weight:normal;transform:scaleX(0.829)">OpenType</div>
<svg class="a" style="left:748px;top:244px" width="7" height="6" viewBox="0 0 7 6"><path d="M0.5 0.5 H6.5 M0.5 2 H6.5 M0.5 3.5 H6.5 M0.5 5 H6.5" stroke="#8c8c8c" stroke-width="0.9"/></svg>
<div class="a" style="left:580px;top:254px;width:178px;height:121px;background:#323232;"></div>
<div class="a" style="left:584px;top:259px;width:124px;height:10px;background:#262626;"></div>
<div class="a" style="left:709px;top:259px;width:9px;height:10px;background:#262626;"></div>
<svg class="a" style="left:586px;top:261px" width="11" height="7" viewBox="0 0 11 7"><circle cx="3" cy="3" r="2.2" stroke="#c8c8c8" fill="none" stroke-width="1"/><path d="M4.5 4.5 L6.3 6.3" stroke="#c8c8c8" stroke-width="1.2"/><path d="M7.5 2.5 L9 4 L10.5 2.5" stroke="#c8c8c8" fill="none" stroke-width="0.9"/></svg>
<div class="t" style="left:599px;top:260px;font-size:8px;color:#e2e2e2;font-weight:normal;transform:scaleX(1.031)">小塚ゴシック Pr6N R</div>
<svg class="a" style="left:711px;top:263px" width="6" height="4" viewBox="0 0 6 4"><path d="M0.5 0.5 L3 3 L5.5 0.5" stroke="#c8c8c8" fill="none" stroke-width="1.1"/></svg>
<div class="a" style="left:584px;top:274px;width:170px;height:10px;background:#262626;"></div>
<div class="a" style="left:587px;top:279px;width:3px;height:1px;background:#c8c8c8;"></div>
<svg class="a" style="left:745px;top:277px" width="6" height="4" viewBox="0 0 6 4"><path d="M0.5 0.5 L3 3 L5.5 0.5" stroke="#c8c8c8" fill="none" stroke-width="1.1"/></svg>
<div class="a" style="left:584px;top:288px;width:170px;height:1px;background:#2a2a2a;"></div>
<div class="a" style="left:596px;top:293px;width:9px;height:10px;background:#2a2a2a;"></div>
<svg class="a" style="left:597px;top:294px" width="7" height="8" viewBox="0 0 7 8"><path d="M1.3 3 L3.5 1 L5.7 3 M1.3 5 L3.5 7 L5.7 5" stroke="#b8b8b8" fill="none" stroke-width="0.9"/></svg>
<div class="a" style="left:606px;top:293px;width:28px;height:10px;background:#262626;"></div>
<div class="t" style="left:608px;top:295px;font-size:8px;color:#dcdcdc;font-weight:normal;transform:scaleX(1.125)">12 pt</div>
<div class="a" style="left:635px;top:293px;width:9px;height:10px;background:#2a2a2a;"></div>
<svg class="a" style="left:637px;top:296px" width="6" height="4" viewBox="0 0 6 4"><path d="M0.5 0.5 L3 3 L5.5 0.5" stroke="#c8c8c8" fill="none" stroke-width="1.1"/></svg>
<div class="a" style="left:706px;top:293px;width:9px;height:10px;background:#2a2a2a;"></div>
<svg class="a" style="left:707px;top:294px" width="7" height="8" viewBox="0 0 7 8"><path d="M1.3 3 L3.5 1 L5.7 3 M1.3 5 L3.5 7 L5.7 5" stroke="#b8b8b8" fill="none" stroke-width="0.9"/></svg>
<div class="a" style="left:716px;top:293px;width:27px;height:10px;background:#262626;"></div>
<div class="t" style="left:718px;top:295px;font-size:8px;color:#dcdcdc;font-weight:normal;transform:scaleX(1.091)">(21 pt)</div>
<div class="a" style="left:744px;top:293px;width:9px;height:10px;background:#2a2a2a;"></div>
<svg class="a" style="left:746px;top:296px" width="6" height="4" viewBox="0 0 6 4"><path d="M0.5 0.5 L3 3 L5.5 0.5" stroke="#c8c8c8" fill="none" stroke-width="1.1"/></svg>
<div class="a" style="left:596px;top:308px;width:9px;height:10px;background:#2a2a2a;"></div>
<svg class="a" style="left:597px;top:309px" width="7" height="8" viewBox="0 0 7 8"><path d="M1.3 3 L3.5 1 L5.7 3 M1.3 5 L3.5 7 L5.7 5" stroke="#b8b8b8" fill="none" stroke-width="0.9"/></svg>
<div class="a" style="left:606px;top:308px;width:28px;height:10px;background:#262626;"></div>
<div class="t" style="left:608px;top:310px;font-size:8px;color:#dcdcdc;font-weight:normal;transform:scaleX(0.842)">100%</div>
<div class="a" style="left:635px;top:308px;width:9px;height:10px;background:#2a2a2a;"></div>
<svg class="a" style="left:637px;top:311px" width="6" height="4" viewBox="0 0 6 4"><path d="M0.5 0.5 L3 3 L5.5 0.5" stroke="#c8c8c8" fill="none" stroke-width="1.1"/></svg>
<div class="a" style="left:706px;top:308px;width:9px;height:10px;background:#2a2a2a;"></div>
<svg class="a" style="left:707px;top:309px" width="7" height="8" viewBox="0 0 7 8"><path d="M1.3 3 L3.5 1 L5.7 3 M1.3 5 L3.5 7 L5.7 5" stroke="#b8b8b8" fill="none" stroke-width="0.9"/></svg>
<div class="a" style="left:716px;top:308px;width:27px;height:10px;background:#262626;"></div>
<div class="t" style="left:718px;top:310px;font-size:8px;color:#dcdcdc;font-weight:normal;transform:scaleX(0.842)">100%</div>
<div class="a" style="left:744px;top:308px;width:9px;height:10px;background:#2a2a2a;"></div>
<svg class="a" style="left:746px;top:311px" width="6" height="4" viewBox="0 0 6 4"><path d="M0.5 0.5 L3 3 L5.5 0.5" stroke="#c8c8c8" fill="none" stroke-width="1.1"/></svg>
<div class="a" style="left:596px;top:322px;width:9px;height:10px;background:#2a2a2a;"></div>
<svg class="a" style="left:597px;top:323px" width="7" height="8" viewBox="0 0 7 8"><path d="M1.3 3 L3.5 1 L5.7 3 M1.3 5 L3.5 7 L5.7 5" stroke="#b8b8b8" fill="none" stroke-width="0.9"/></svg>
<div class="a" style="left:606px;top:322px;width:28px;height:10px;background:#262626;"></div>
<div class="t" style="left:608px;top:324px;font-size:8px;color:#dcdcdc;font-weight:normal;transform:scaleX(1.000)">0</div>
<div class="a" style="left:635px;top:322px;width:9px;height:10px;background:#2a2a2a;"></div>
<svg class="a" style="left:637px;top:325px" width="6" height="4" viewBox="0 0 6 4"><path d="M0.5 0.5 L3 3 L5.5 0.5" stroke="#c8c8c8" fill="none" stroke-width="1.1"/></svg>
<div class="a" style="left:706px;top:322px;width:9px;height:10px;background:#2a2a2a;"></div>
<svg class="a" style="left:707px;top:323px" width="7" height="8" viewBox="0 0 7 8"><path d="M1.3 3 L3.5 1 L5.7 3 M1.3 5 L3.5 7 L5.7 5" stroke="#b8b8b8" fill="none" stroke-width="0.9"/></svg>
<div class="a" style="left:716px;top:322px;width:27px;height:10px;background:#262626;"></div>
<div class="t" style="left:718px;top:324px;font-size:8px;color:#dcdcdc;font-weight:normal;transform:scaleX(1.000)">0</div>
<div class="a" style="left:744px;top:322px;width:9px;height:10px;background:#2a2a2a;"></div>
<svg class="a" style="left:746px;top:325px" width="6" height="4" viewBox="0 0 6 4"><path d="M0.5 0.5 L3 3 L5.5 0.5" stroke="#c8c8c8" fill="none" stroke-width="1.1"/></svg>
<svg class="a" style="left:582px;top:292px" width="12" height="12" viewBox="0 0 12 12"><path d="M1 5.5 H5 M3 5.5 V10" stroke="#c8c8c8" stroke-width="1"/><path d="M5 2.2 H11.5 M8.25 2.2 V10 M6.8 10 H9.7 M5 2.2 V3.5 M11.5 2.2 V3.5" stroke="#c8c8c8" stroke-width="1.3" fill="none"/></svg>
<svg class="a" style="left:582px;top:307px" width="12" height="12" viewBox="0 0 12 12"><path d="M2.5 1 V10.5 M1 2.2 L2.5 0.8 L4 2.2 M1 9.3 L2.5 10.7 L4 9.3" stroke="#c8c8c8" stroke-width="0.9" fill="none"/><path d="M5 2.2 H11.5 M8.25 2.2 V10 M6.8 10 H9.7 M5 2.2 V3.5 M11.5 2.2 V3.5" stroke="#c8c8c8" stroke-width="1.3" fill="none"/></svg>
<svg class="a" style="left:582px;top:321px" width="12" height="12" viewBox="0 0 12 12"><path d="M0.8 1.5 L3 7 L5.2 1.5 M4.5 7 L7 1.5 L9.5 7 M5.5 5 H8.5" stroke="#c8c8c8" stroke-width="1.1" fill="none"/><path d="M6 10 H11 M7 9 L6 10 L7 11" stroke="#c8c8c8" stroke-width="0.9" fill="none"/></svg>
<svg class="a" style="left:692px;top:292px" width="12" height="12" viewBox="0 0 12 12"><path d="M5 0.5 L7.5 5.5 H2.5 Z M5 5.5 L7.8 11 H2.2 Z" stroke="#c8c8c8" stroke-width="0.9" fill="none"/><path d="M1 5 V10 M0.2 6 L1 5 L1.8 6 M0.2 9 L1 10 L1.8 9" stroke="#c8c8c8" stroke-width="0.8" fill="none"/><path d="M3.5 8.5 H6.5" stroke="#c8c8c8" stroke-width="0.8"/></svg>
<svg class="a" style="left:692px;top:307px" width="12" height="12" viewBox="0 0 12 12"><path d="M2 1.5 H10 M6 1.5 V8 M4.5 8 H7.5 M2 1.5 V3 M10 1.5 V3" stroke="#c8c8c8" stroke-width="1.3" fill="none"/><path d="M1 10.5 H11" stroke="#c8c8c8" stroke-width="0.9"/><circle cx="1.3" cy="10.5" r="0.9" fill="#c8c8c8"/><circle cx="10.7" cy="10.5" r="0.9" fill="#c8c8c8"/></svg>
<svg class="a" style="left:692px;top:321px" width="12" height="12" viewBox="0 0 12 12"><rect x="0.5" y="0.5" width="11" height="7.5" fill="#c8c8c8"/><path d="M1.5 1.5 L3.3 6.5 L5.1 1.5 M4.8 6.5 L7 1.5 L9.2 6.5 M5.7 4.7 H8.3" stroke="#323232" stroke-width="1" fill="none"/><path d="M1 10.5 H11" stroke="#c8c8c8" stroke-width="0.9"/><circle cx="1.3" cy="10.5" r="0.9" fill="#c8c8c8"/><circle cx="10.7" cy="10.5" r="0.9" fill="#c8c8c8"/></svg>
<div class="a" style="left:584px;top:337px;width:150px;height:1px;background:#2a2a2a;"></div>
<div class="t" style="left:583px;top:343px;font-size:8px;color:#a8a8a8;font-weight:normal;transform:scaleX(1.146)">グリフにスナップ</div>
<svg class="a" style="left:643px;top:342px" width="10" height="10" viewBox="0 0 10 10"><circle cx="5" cy="5" r="4.2" stroke="#c0c0c0" fill="none" stroke-width="1"/><path d="M5 4 V7.5" stroke="#c0c0c0" stroke-width="1.2"/><circle cx="5" cy="2.6" r="0.7" fill="#c0c0c0"/></svg>
<div class="a" style="left:583px;top:357px;width:15px;height:15px;background:#383838;border-radius:1px"></div>
<div class="a" style="left:604px;top:357px;width:15px;height:15px;background:#383838;border-radius:1px"></div>
<div class="a" style="left:625px;top:357px;width:15px;height:15px;background:#383838;border-radius:1px"></div>
<div class="a" style="left:646px;top:357px;width:15px;height:15px;background:#383838;border-radius:1px"></div>
<div class="a" style="left:675px;top:357px;width:15px;height:15px;background:#383838;border-radius:1px"></div>
<div class="a" style="left:696px;top:357px;width:15px;height:15px;background:#383838;border-radius:1px"></div>
<div class="a" style="left:668px;top:358px;width:1px;height:13px;background:#2a2a2a;"></div>
<svg class="a" style="left:583px;top:357px" width="15" height="15" viewBox="0 0 15 15"><path d="M2.5 11 L5 3.5 L7.5 11 M3.3 8.5 H6.7 M8.5 6.5 L12 11 M12 6.5 L8.5 11 M1.5 11.8 H13.5" stroke="#6e6e6e" stroke-width="0.9" fill="none"/></svg>
<svg class="a" style="left:604px;top:357px" width="15" height="15" viewBox="0 0 15 15"><path d="M2.5 11 L5 3.5 L7.5 11 M3.3 8.5 H6.7 M8.5 6.5 L12 11 M12 6.5 L8.5 11 M1.5 6.5 H13.5" stroke="#6e6e6e" stroke-width="0.9" fill="none"/></svg>
<svg class="a" style="left:625px;top:357px" width="15" height="15" viewBox="0 0 15 15"><rect x="1.5" y="1.5" width="12" height="12" fill="none" stroke="#7a7a7a" stroke-width="0.9"/><path d="M3 10 L5 4 L7 10 M3.6 8 H6.4 M11.5 6.5 V11.5 Q11.5 13 9.5 13 M11.5 7.5 Q10.5 6.5 9.5 6.7 Q8 7 8 8.5 Q8 10 9.5 10 Q10.8 10 11.5 9" stroke="#8a8a8a" stroke-width="0.9" fill="none"/></svg>
<svg class="a" style="left:646px;top:357px" width="15" height="15" viewBox="0 0 15 15"><path d="M3 10 L5 4 L7 10 M3.6 8 H6.4 M11.5 6.5 V11.5 Q11.5 13 9.5 13 M11.5 7.5 Q10.5 6.5 9.5 6.7 Q8 7 8 8.5 Q8 10 9.5 10 Q10.8 10 11.5 9 M1.5 6 H13.5" stroke="#6e6e6e" stroke-width="0.9" fill="none"/></svg>
<svg class="a" style="left:675px;top:357px" width="15" height="15" viewBox="0 0 15 15"><path d="M3.5 12 L7 3 L10.5 12 M5 9 H9 M5.5 3 H8.5 M11.5 12 H5" stroke="#7a7a7a" stroke-width="1" fill="none"/></svg>
<svg class="a" style="left:696px;top:357px" width="15" height="15" viewBox="0 0 15 15"><path d="M4 12 L7.5 3 L11 12 M5.5 9 H9.5 M7.5 3 V1.5" stroke="#6e6e6e" stroke-width="1" fill="none"/></svg>
<div class="a" style="left:580px;top:375px;width:178px;height:17px;background:#282828;"></div>
<div class="a" style="left:580px;top:375px;width:34px;height:17px;background:#323232;"></div>
<div class="t" style="left:586px;top:380px;font-size:8px;color:#dcdcdc;font-weight:normal;transform:scaleX(0.800)">アクション</div>
<div class="t" style="left:619px;top:380px;font-size:8px;color:#9c9c9c;font-weight:normal;transform:scaleX(0.833)">リンク</div>
<svg class="a" style="left:748px;top:381px" width="7" height="6" viewBox="0 0 7 6"><path d="M0.5 0.5 H6.5 M0.5 2 H6.5 M0.5 3.5 H6.5 M0.5 5 H6.5" stroke="#8c8c8c" stroke-width="0.9"/></svg>
<div class="a" style="left:580px;top:394px;width:178px;height:16px;background:#282828;"></div>
<div class="a" style="left:580px;top:394px;width:31px;height:16px;background:#323232;"></div>
<div class="t" style="left:586px;top:398px;font-size:8px;color:#dcdcdc;font-weight:normal;transform:scaleX(0.917)">レイヤー</div>
<div class="t" style="left:617px;top:398px;font-size:8px;color:#9c9c9c;font-weight:normal;transform:scaleX(0.773)">CC ライブラリ</div>
<svg class="a" style="left:748px;top:399px" width="7" height="6" viewBox="0 0 7 6"><path d="M0.5 0.5 H6.5 M0.5 2 H6.5 M0.5 3.5 H6.5 M0.5 5 H6.5" stroke="#8c8c8c" stroke-width="0.9"/></svg>
</body></html>
